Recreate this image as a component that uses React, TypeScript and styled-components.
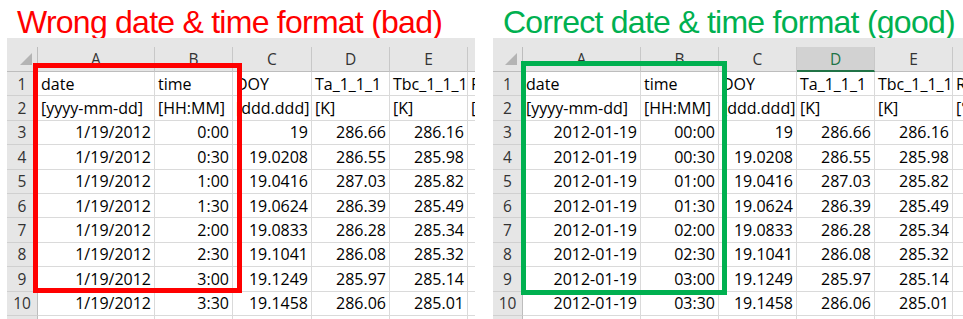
import React from 'react';
import styled, { createGlobalStyle } from 'styled-components';

const GlobalStyle = createGlobalStyle`
  html, body { margin: 0; padding: 0; background: #ffffff; }
  body { width: 963px; height: 319px; overflow: hidden; }
`;

const Page = styled.main`
  display: flex;
  width: 963px;
  height: 319px;
  overflow: hidden;
  background: #ffffff;
`;

const Panel = styled.section<{ $width: number }>`
  flex: none;
  width: ${(p) => p.$width}px;
  display: flex;
  flex-direction: column;
  overflow: hidden;
`;

const Title = styled.h1<{ $color: string; $indent: number }>`
  margin: 0;
  height: 38px;
  box-sizing: border-box;
  padding: 6px 0 0 ${(p) => p.$indent}px;
  font-family: "Liberation Sans", Arial, sans-serif;
  font-weight: 400;
  font-size: 32px;
  line-height: 32px;
  letter-spacing: -0.75px;
  color: ${(p) => p.$color};
  white-space: nowrap;
`;

const Sheet = styled.div<{ $inset: number; $width: number }>`
  position: relative;
  flex: 1;
  margin-left: ${(p) => p.$inset}px;
  width: ${(p) => p.$width}px;
  overflow: hidden;
  background: #ffffff;
  font-family: "Open Sans", "Liberation Sans", sans-serif;
`;

const TopStrip = styled.div`
  height: 9px;
  background: #e6e6e6;
`;

const Grid = styled.div<{ $cols: string }>`
  display: grid;
  grid-template-columns: ${(p) => p.$cols};
  grid-template-rows: 25px;
  grid-auto-rows: 24.4px;
`;

const Corner = styled.div`
  display: flex;
  justify-content: flex-end;
  align-items: flex-end;
  padding: 0 5px 6px 0;
  background: #e6e6e6;
  border-right: 1px solid #bdbdbd;
  border-bottom: 1px solid #bdbdbd;
`;

const Triangle = styled.div`
  width: 0;
  height: 0;
  border-left: 12px solid transparent;
  border-bottom: 12px solid #b4b4b4;
`;

const ColHeader = styled.div<{ $selected?: boolean }>`
  display: flex;
  align-items: center;
  justify-content: center;
  background: ${(p) => (p.$selected ? '#d2d2d2' : '#e6e6e6')};
  color: ${(p) => (p.$selected ? '#217346' : '#333333')};
  border-right: 1px solid #c8c8c8;
  border-bottom: ${(p) => (p.$selected ? '2px solid #217346' : '1px solid #bdbdbd')};
  font-size: 15.5px;
  white-space: nowrap;
  overflow: hidden;
`;

const RowHeader = styled.div`
  display: flex;
  align-items: center;
  justify-content: center;
  background: #e6e6e6;
  color: #333333;
  border-right: 1px solid #bdbdbd;
  border-bottom: 1px solid #d0d0d0;
  font-size: 15.5px;
  white-space: nowrap;
  overflow: hidden;
`;

const Cell = styled.div<{ $align: 'left' | 'right' }>`
  display: flex;
  align-items: center;
  justify-content: ${(p) => (p.$align === 'right' ? 'flex-end' : 'flex-start')};
  padding: 0 3px;
  border-right: 1px solid #dadada;
  border-bottom: 1px solid #dadada;
  color: #000000;
  font-size: 16px;
  white-space: nowrap;
  overflow: hidden;
`;

const Highlight = styled.div<{ $color: string }>`
  position: absolute;
  box-sizing: border-box;
  border: 5px solid ${(p) => p.$color};
  pointer-events: none;
`;

const DOY = ['19', '19.0208', '19.0416', '19.0624', '19.0833', '19.1041', '19.1249', '19.1458'];
const TA = ['286.66', '286.55', '287.03', '286.39', '286.28', '286.08', '285.97', '286.06'];
const TBC = ['286.16', '285.98', '285.82', '285.49', '285.34', '285.32', '285.14', '285.01'];

const LEFT_DATES = Array(8).fill('1/19/2012');
const LEFT_TIMES = ['0:00', '0:30', '1:00', '1:30', '2:00', '2:30', '3:00', '3:30'];
const RIGHT_DATES = Array(8).fill('2012-01-19');
const RIGHT_TIMES = ['00:00', '00:30', '01:00', '01:30', '02:00', '02:30', '03:00', '03:30'];

type SheetProps = {
  cols: string;
  inset: number;
  width: number;
  dates: string[];
  times: string[];
  selectedCol?: string;
  box: { left: number; top: number; width: number; height: number; color: string };
};

const LETTERS = ['A', 'B', 'C', 'D', 'E', 'F'];

function Spreadsheet({ cols, inset, width, dates, times, selectedCol, box }: SheetProps) {
  const textRows: string[][] = [
    ['date', 'time', 'DOY', 'Ta_1_1_1', 'Tbc_1_1_1', 'RH_1_1_1'],
    ['[yyyy-mm-dd]', '[HH:MM]', '[ddd.ddd]', '[K]', '[K]', '[°C]'],
  ];
  return (
    <Sheet $inset={inset} $width={width}>
      <TopStrip />
      <Grid $cols={cols}>
        <Corner>
          <Triangle />
        </Corner>
        {LETTERS.map((l) => (
          <ColHeader key={l} $selected={l === selectedCol}>
            {l}
          </ColHeader>
        ))}
        {textRows.map((row, i) => (
          <React.Fragment key={`t${i}`}>
            <RowHeader>{i + 1}</RowHeader>
            {row.map((v, j) => (
              <Cell key={j} $align="left">
                {v}
              </Cell>
            ))}
          </React.Fragment>
        ))}
        {dates.map((d, i) => (
          <React.Fragment key={`d${i}`}>
            <RowHeader>{i + 3}</RowHeader>
            <Cell $align="right">{d}</Cell>
            <Cell $align="right">{times[i]}</Cell>
            <Cell $align="right">{DOY[i]}</Cell>
            <Cell $align="right">{TA[i]}</Cell>
            <Cell $align="right">{TBC[i]}</Cell>
            <Cell $align="right" />
          </React.Fragment>
        ))}
        <RowHeader>11</RowHeader>
        {LETTERS.map((l) => (
          <Cell key={`e${l}`} $align="left" />
        ))}
      </Grid>
      <Highlight
        $color={box.color}
        style={{ left: box.left, top: box.top, width: box.width, height: box.height }}
      />
    </Sheet>
  );
}

export default function App() {
  return (
    <>
      <GlobalStyle />
      <Page>
        <Panel $width={480}>
          <Title $color="#ff0000" $indent={17}>
            Wrong date &amp; time format (bad)
          </Title>
          <Spreadsheet
            cols="31px 117px 78px 79px 78px 78px 78px"
            inset={7}
            width={468}
            dates={LEFT_DATES}
            times={LEFT_TIMES}
            box={{ left: 26, top: 25, width: 209, height: 230, color: '#ff0000' }}
          />
        </Panel>
        <Panel $width={483}>
          <Title $color="#00b050" $indent={23}>
            Correct date &amp; time format (good)
          </Title>
          <Spreadsheet
            cols="30px 118px 78px 78px 78px 78px 78px"
            inset={13}
            width={470}
            dates={RIGHT_DATES}
            times={RIGHT_TIMES}
            selectedCol="D"
            box={{ left: 28, top: 23, width: 206, height: 234, color: '#00b050' }}
          />
        </Panel>
      </Page>
    </>
  );
}
